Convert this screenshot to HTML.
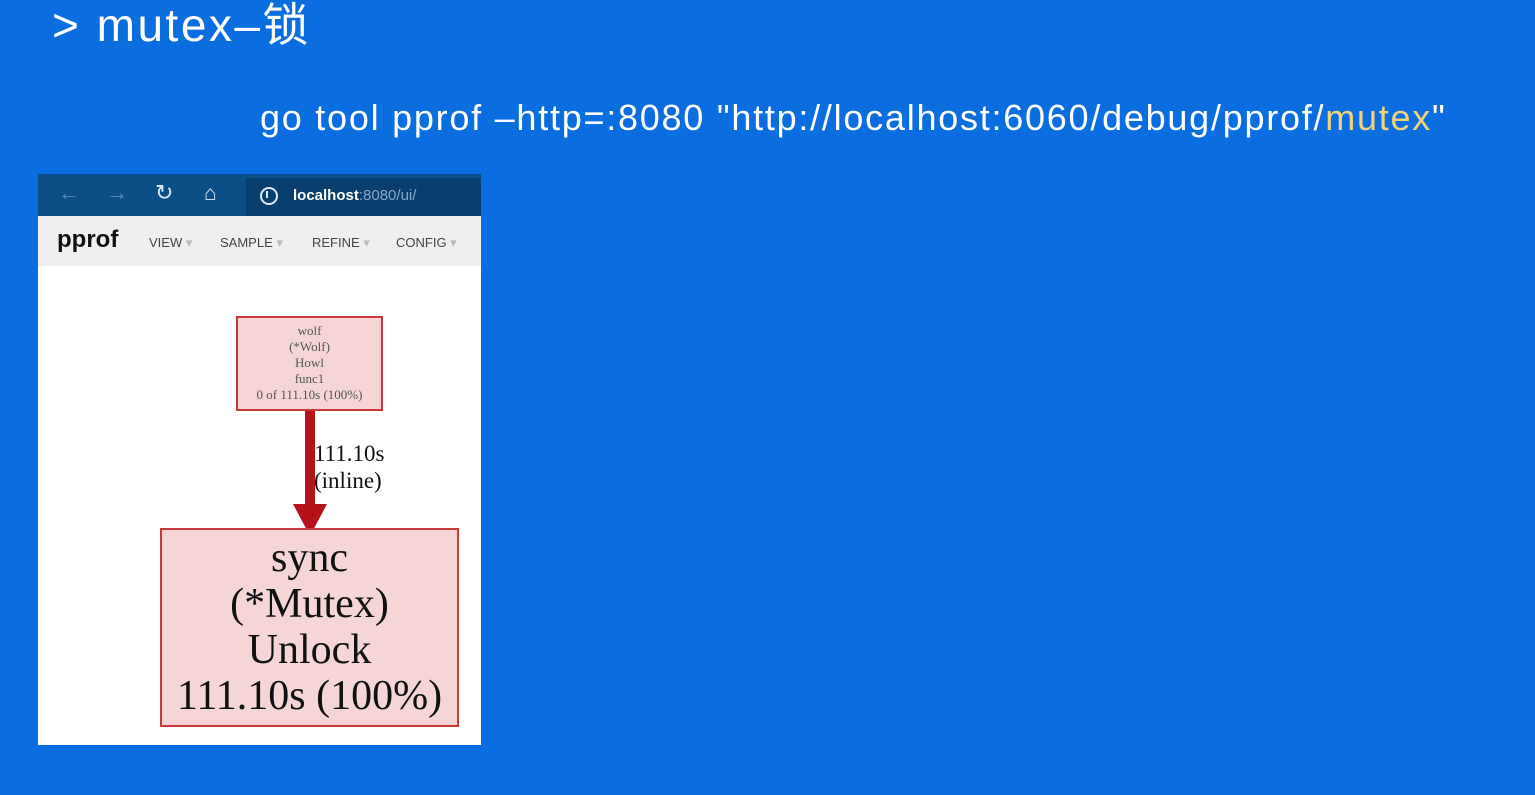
<!DOCTYPE html>
<html><head><meta charset="utf-8"><style>
body{margin:0;width:1535px;height:795px;background:#0a6de0;overflow:hidden;position:relative;font-family:"Liberation Sans","Noto Sans CJK SC",sans-serif;color:#fff}
.a{position:absolute;white-space:nowrap}
.serif{font-family:"Liberation Serif","DejaVu Serif",serif;color:#111;text-align:center}
</style></head><body>
<div class="a" style="left:52px;top:-1px;font-size:46px;line-height:52px;letter-spacing:2.5px">&gt; mutex–锁</div>
<div class="a" style="left:260px;top:96px;font-size:36px;line-height:44px;letter-spacing:1.75px">go tool pprof –http=:8080 "http://localhost:6060/debug/pprof/<span style="color:#f3d27a">mutex</span>"</div>
<div class="a" style="left:38px;top:174px;width:443px;height:571px;background:#fff">
 <div class="a" style="left:0;top:0;width:443px;height:42px;background:#0c4f86"></div>
 <div class="a" style="left:208px;top:4px;width:235px;height:38px;background:#083f6e"></div>
 <div class="a" style="left:20px;top:6px;font-size:22px;color:#5d8cbb">←</div>
 <div class="a" style="left:68px;top:6px;font-size:22px;color:#5d8cbb">→</div>
 <div class="a" style="left:117px;top:6px;font-size:22px;color:#dfe8f2">↻</div>
 <div class="a" style="left:166px;top:8px;font-size:21px;color:#dfe8f2">⌂</div>
 <div class="a" style="left:222px;top:13px;width:14px;height:14px;border:2px solid #dfe8f2;border-radius:50%"></div>
 <div class="a" style="left:228px;top:17px;width:2px;height:7px;background:#dfe8f2"></div>
 <div class="a" style="left:255px;top:13px;font-size:15px;color:#fff;font-weight:bold">localhost<span style="color:#8ba7c4;font-weight:normal">:8080/ui/</span></div>
 <div class="a" style="left:0;top:42px;width:443px;height:50px;background:#efefef"></div>
 <div class="a" style="left:19px;top:52px;font-size:24px;font-weight:bold;color:#111">pprof</div>
 <div class="a" style="left:111px;top:61px;font-size:13px;color:#444">VIEW <span style="color:#bbb">▾</span></div>
 <div class="a" style="left:182px;top:61px;font-size:13px;color:#444">SAMPLE <span style="color:#bbb">▾</span></div>
 <div class="a" style="left:274px;top:61px;font-size:13px;color:#444">REFINE <span style="color:#bbb">▾</span></div>
 <div class="a" style="left:358px;top:61px;font-size:13px;color:#444">CONFIG <span style="color:#bbb">▾</span></div>
 <div class="a serif" style="left:198px;top:142px;width:147px;height:95px;background:#f5d5d5;border:2px solid #c83a3a;font-size:13px;line-height:16px;padding-top:5px;box-sizing:border-box;color:#555">wolf<br>(*Wolf)<br>Howl<br>func1<br>0 of 111.10s (100%)</div>
 <div class="a" style="left:267px;top:237px;width:10px;height:97px;background:#b5121b"></div>
 <div class="a" style="left:255px;top:330px;width:0;height:0;border-left:17px solid transparent;border-right:17px solid transparent;border-top:32px solid #b5121b"></div>
 <div class="a serif" style="left:276px;top:266px;font-size:23px;line-height:27px;text-align:left">111.10s<br>(inline)</div>
 <div class="a serif" style="left:122px;top:354px;width:299px;height:199px;background:#f5d5d5;border:2px solid #c83a3a;box-sizing:border-box;font-size:42px;line-height:46px;padding-top:5px">sync<br>(*Mutex)<br>Unlock<br>111.10s (100%)</div>
</div>
</body></html>
